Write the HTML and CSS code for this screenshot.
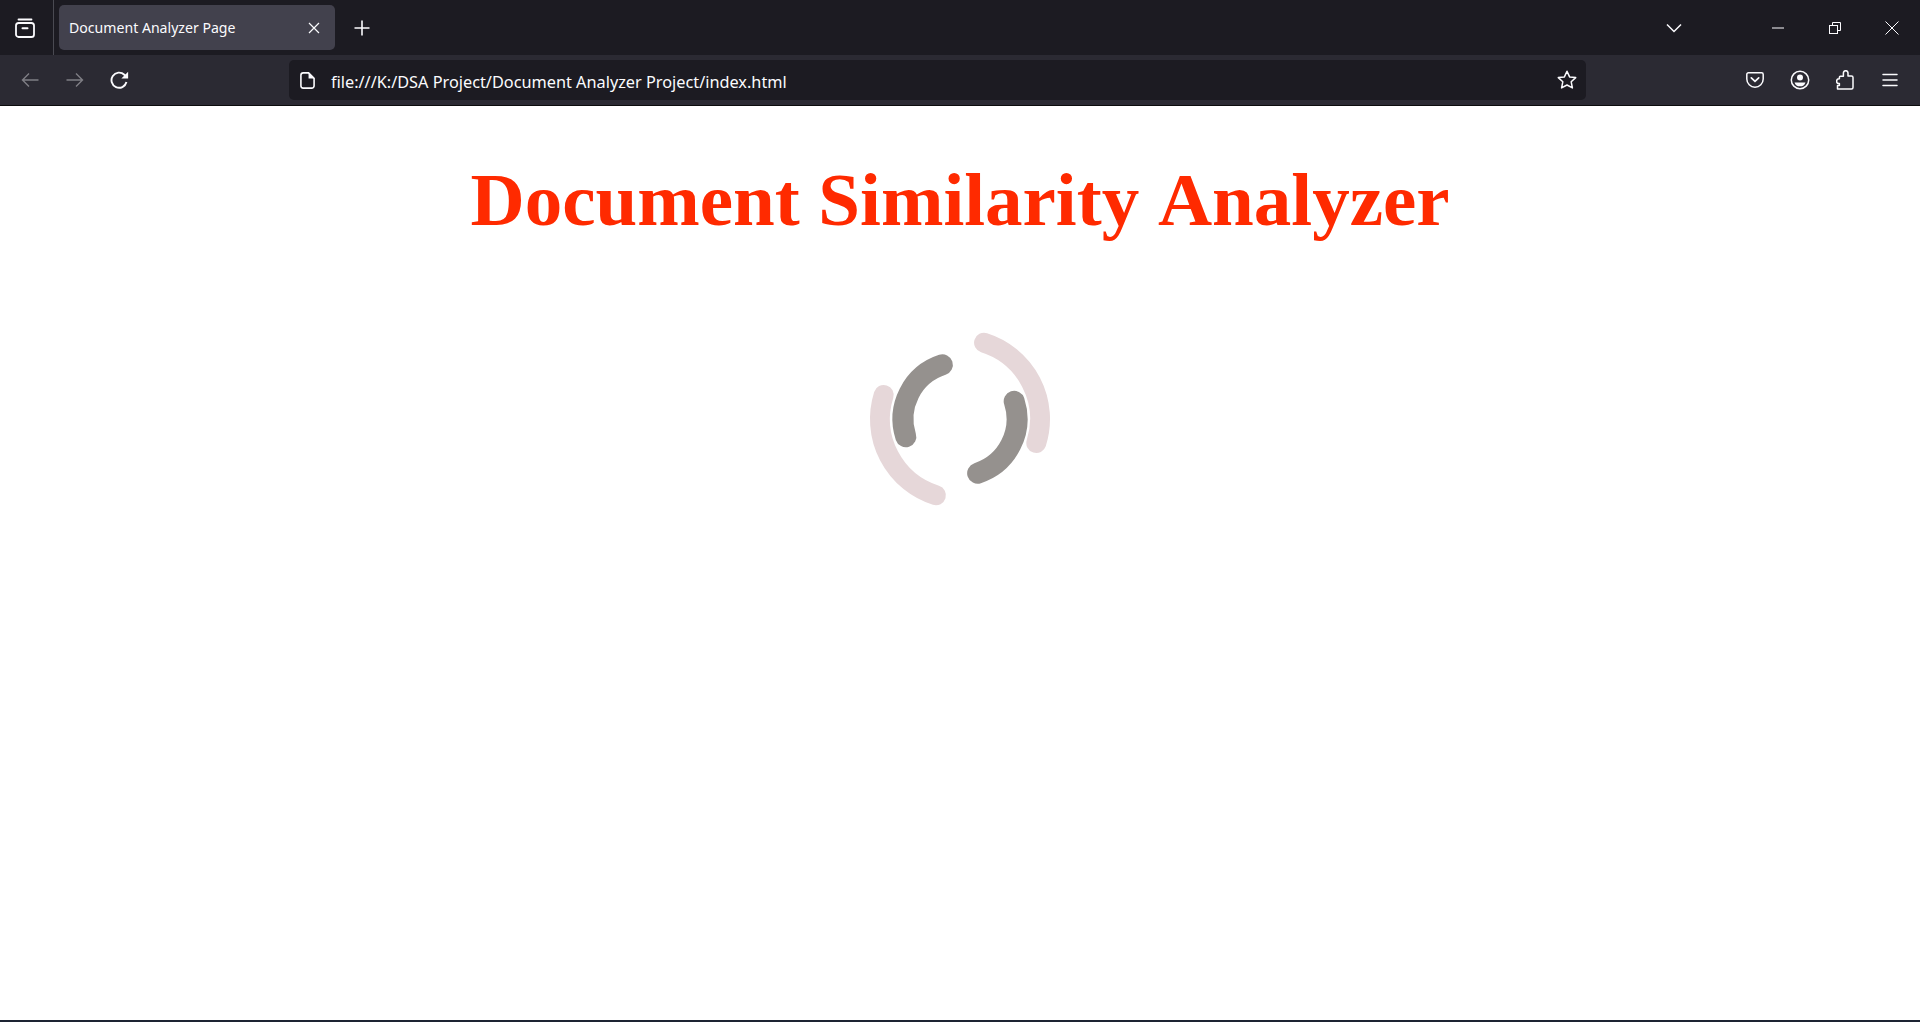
FILE: index.html
```html
<!DOCTYPE html>
<html lang="en">
<head>
<meta charset="UTF-8" />
<meta name="viewport" content="width=device-width, initial-scale=1" />
<title>Document Analyzer Page</title>
<link rel="stylesheet" href="styles.css">
</head>
<body>
  <div class="tabbar">
    <div class="btn view-btn">
      <svg width="20" height="20" viewBox="0 0 20 20" fill="none" stroke="#fbfbfe" stroke-width="1.8" stroke-linecap="round"><path d="M3.5 1.5h13"/><rect x="1" y="5" width="18" height="14" rx="2.6"/><path d="M7.5 10.2h5" stroke-width="2"/></svg>
    </div>
    <div class="tab">
      <span class="tab-title">Document Analyzer Page</span>
      <svg width="12" height="12" viewBox="0 0 12 12" stroke="#fbfbfe" stroke-width="1.2" fill="none"><path d="M1 1l10 10M11 1L1 11"/></svg>
    </div>
    <div class="btn new-tab">
      <svg width="16" height="16" viewBox="0 0 16 16" stroke="#fbfbfe" stroke-width="1.6" fill="none"><path d="M8 .5v15M.5 8h15"/></svg>
    </div>
    <div class="spacer"></div>
    <div class="btn tabs-list">
      <svg width="16" height="10" viewBox="0 0 16 10" stroke="#fbfbfe" stroke-width="1.5" fill="none"><path d="M1 1.5l7 7 7-7"/></svg>
    </div>
    <div class="win-btn">
      <svg width="12" height="2" viewBox="0 0 12 2" stroke="#fbfbfe" fill="none"><path d="M0 1h12"/></svg>
    </div>
    <div class="win-btn">
      <svg width="12" height="12" viewBox="0 0 12 12" stroke="#fbfbfe" fill="none"><rect x="0.5" y="3.5" width="8" height="8"/><path d="M3.5 3.5v-3h8v8h-3"/></svg>
    </div>
    <div class="win-btn">
      <svg width="14" height="14" viewBox="0 0 14 14" stroke="#fbfbfe" fill="none"><path d="M.5.5l13 13M13.5.5l-13 13"/></svg>
    </div>
  </div>

  <div class="toolbar">
    <div class="btn muted">
      <svg width="18" height="16" viewBox="0 0 18 16" stroke="#fbfbfe" stroke-width="1.4" fill="none"><path d="M17.5 8H1.5M8 1.5L1.5 8 8 14.5"/></svg>
    </div>
    <div class="btn muted">
      <svg width="18" height="16" viewBox="0 0 18 16" stroke="#fbfbfe" stroke-width="1.4" fill="none"><path d="M.5 8h16M10 1.5L16.5 8 10 14.5"/></svg>
    </div>
    <div class="btn">
      <svg width="19" height="19" viewBox="0 0 18 18" fill="none" stroke="#fbfbfe" stroke-width="1.8"><path d="M15.6 10.5A7.2 7.2 0 1 1 13.6 3.5L16.2 6"/><path d="M17.2.8v6.4h-6.4z" fill="#fbfbfe" stroke="none"/></svg>
    </div>
    <div class="urlbar">
      <svg width="15" height="17" viewBox="0 0 14 16" fill="none" stroke="#fbfbfe" stroke-width="1.5"><path d="M3 .8h5L13.2 6v7a2.2 2.2 0 0 1-2.2 2.2H3A2.2 2.2 0 0 1 .8 13V3A2.2 2.2 0 0 1 3 .8z"/><path d="M8 .8V6h5.2" fill="#fbfbfe" stroke="none"/></svg>
      <span class="url">file:///K:/DSA Project/Document Analyzer Project/index.html</span>
      <div class="spacer"></div>
      <svg width="20" height="20" viewBox="0 0 20 20" fill="none" stroke="#fbfbfe" stroke-width="1.5" stroke-linejoin="round"><path d="M10 1.3l2.6 5.6 6.1.7-4.5 4.2 1.2 6.1L10 15l-5.4 2.9 1.2-6.1-4.5-4.2 6.1-.7z"/></svg>
    </div>
    <div class="btn">
      <svg width="18" height="16" viewBox="0 0 18 16" fill="none" stroke="#fbfbfe" stroke-width="1.5" stroke-linecap="round"><path d="M2.4.8h13.2A1.6 1.6 0 0 1 17.2 2.4V7A8.2 8.2 0 0 1 .8 7V2.4A1.6 1.6 0 0 1 2.4.8z"/><path d="M5.3 5.8L9 9.4l3.7-3.6" stroke-width="1.7"/></svg>
    </div>
    <div class="btn">
      <svg width="20" height="20" viewBox="0 0 20 20" fill="none" stroke="#fbfbfe" stroke-width="1.5"><circle cx="10" cy="10" r="8.7"/><circle cx="10" cy="7.6" r="3" fill="#fbfbfe" stroke="none"/><path d="M4.5 12.4h11a5.8 5.8 0 0 1-11 0z" fill="#fbfbfe" stroke="none"/></svg>
    </div>
    <div class="btn">
      <svg width="18" height="20" viewBox="0 0 18 20" fill="none" stroke="#fbfbfe" stroke-width="1.5" stroke-linejoin="round"><path d="M1.5 19h14a1.5 1.5 0 0 0 1.5-1.5V7.5A1.5 1.5 0 0 0 15.5 6H12V3a2.3 2.3 0 0 0-4.6 0v3.2H4.4a1 1 0 0 0-1 1v1.6H3a2.4 2.4 0 0 0 0 4.8h.4V15.500H1.500z"/></svg>
    </div>
    <div class="btn">
      <svg width="16" height="14" viewBox="0 0 16 14" stroke="#fbfbfe" stroke-width="1.5" stroke-linecap="round" fill="none"><path d="M1 1.5h14M1 7h14M1 12.5h14"/></svg>
    </div>
  </div>

  <main class="page">
    <h1 class="title">Document Similarity Analyzer</h1>
    <svg class="spinner" width="200" height="200" viewBox="0 0 200 200" fill="none" stroke-width="20" stroke-linecap="round">
      <g stroke="#e6d7d9">
        <path d="M124.06 23.7A80 80 0 0 1 176.3 124.06"/>
        <path d="M75.94 176.3A80 80 0 0 1 23.7 75.94"/>
      </g>
      <g stroke="#95918e" stroke-width="21">
        <path d="M45.8 117.65A57 57 0 0 1 82.35 45.8"/>
        <path d="M154.2 82.35A57 57 0 0 1 117.65 154.2"/>
      </g>
    </svg>
  </main>

  <div class="taskbar-edge"></div>
</body>
</html>
```

FILE: styles.css
```css
* {
  box-sizing: border-box;
}
body {
  margin: 0;
  height: 100vh;
  display: flex;
  flex-direction: column;
  overflow: hidden;
  background: #fff;
  font-family: "Noto Sans", "Open Sans", sans-serif;
  color: #fbfbfe;
}
svg {
  display: block;
  flex-shrink: 0;
}
.spacer {
  flex: 1;
}
.btn {
  width: 45px;
  display: flex;
  align-items: center;
  justify-content: center;
}
.muted svg {
  opacity: 0.4;
}

/* tab strip */
.tabbar {
  height: 55px;
  display: flex;
  align-items: stretch;
  background: #1c1b22;
}
.view-btn {
  width: 54px;
  padding: 1px 4px 0 0;
  border-right: 1px solid #4a4a52;
}
.tab {
  width: 276px;
  height: 45px;
  margin: 5px 0 0 5px;
  padding: 0 15px 0 10px;
  display: flex;
  align-items: center;
  justify-content: space-between;
  background: #42414d;
  border-radius: 5px;
}
.tab-title {
  font-size: 14.1px;
}
.new-tab {
  margin-left: 4px;
}
.tabs-list {
  margin-right: 53px;
}
.win-btn {
  width: 57px;
  display: flex;
  align-items: center;
  justify-content: center;
}

/* nav bar */
.toolbar {
  height: 51px;
  padding: 5px 8px 5px 7px;
  display: flex;
  align-items: stretch;
  background: #2b2a33;
  border-bottom: 1px solid #0c0c0d;
}
.urlbar {
  flex: 1;
  margin: 0 146px 0 147px;
  padding: 0 9px 0 11px;
  display: flex;
  align-items: center;
  background: #1c1b22;
  border-radius: 5px;
}
.url {
  margin-left: 16px;
  padding-top: 3px;
  font-size: 16.3px;
}

/* page */
.page {
  flex: 1;
  display: flex;
  flex-direction: column;
  align-items: center;
}
.title {
  margin: 51px 0 0;
  font-family: "Liberation Serif", serif;
  font-size: 75px;
  font-weight: bold;
  font-kerning: none;
  line-height: 1.15;
  color: #ff2a00;
}
.spinner {
  margin-top: 76px;
}
.taskbar-edge {
  height: 2px;
  background: #1d2433;
}
```
